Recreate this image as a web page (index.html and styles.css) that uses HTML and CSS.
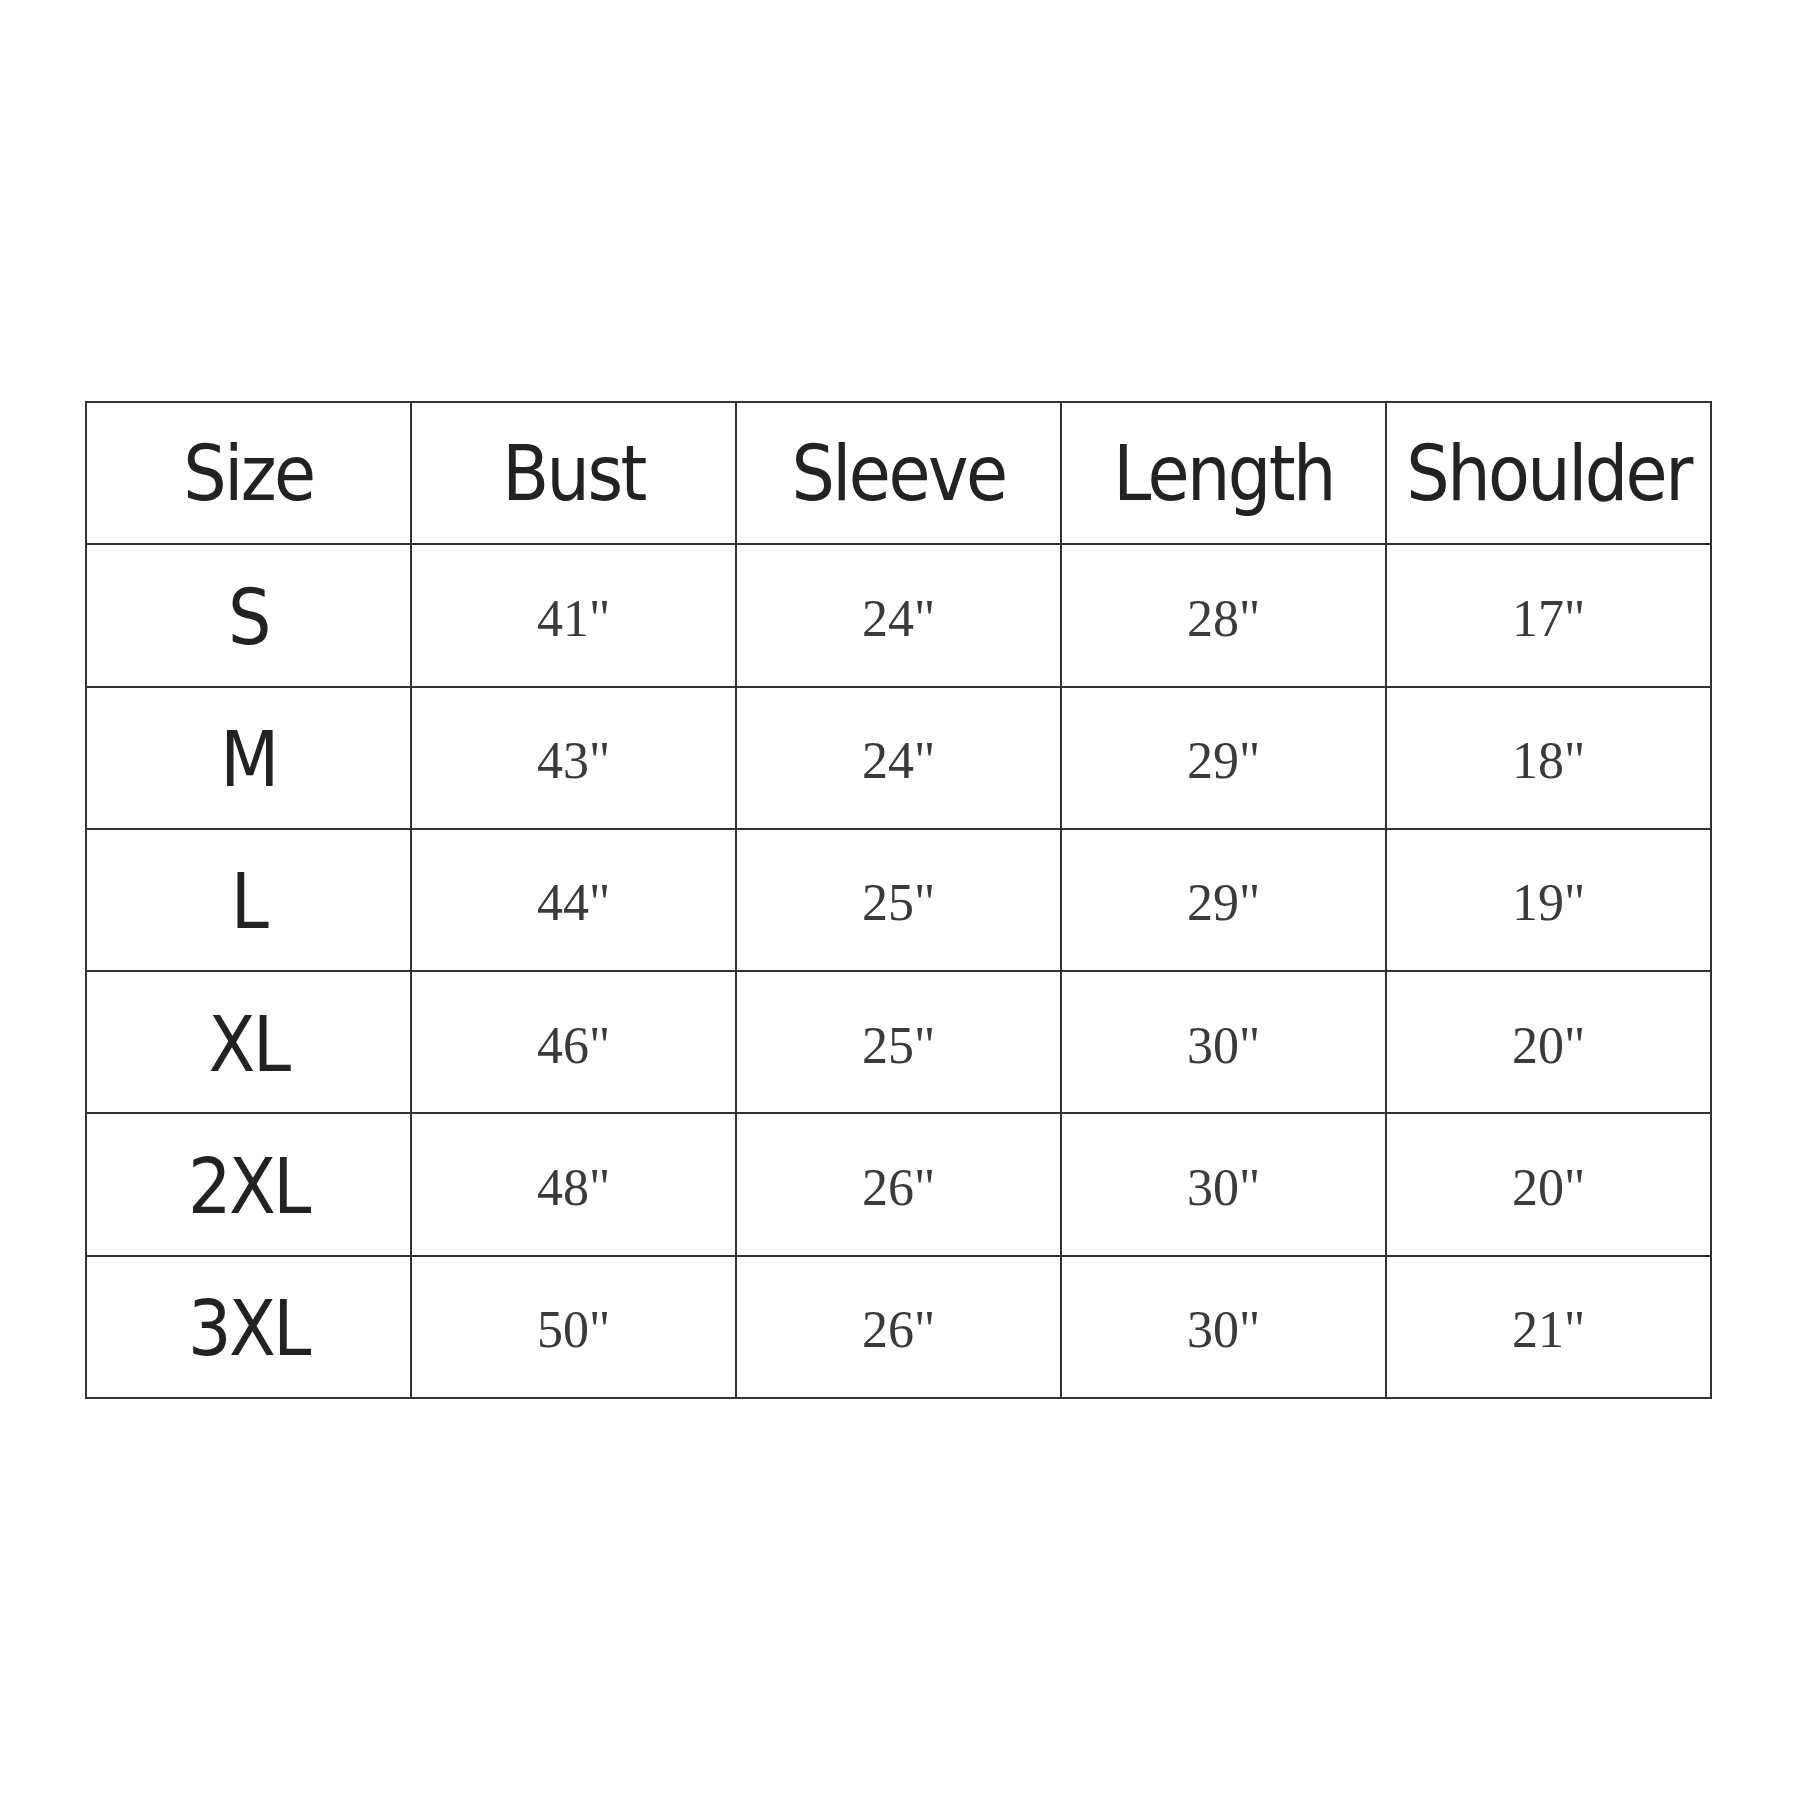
FILE: index.html
```html
<!DOCTYPE html>
<html>
<head>
<meta charset="utf-8">
<link rel="stylesheet" href="styles.css">
</head>
<body>
<div class="page">
  <div class="chart">
    <div class="cell head">Size</div><div class="cell head">Bust</div><div class="cell head">Sleeve</div><div class="cell head">Length</div><div class="cell head">Shoulder</div>
    <div class="cell size">S</div><div class="cell num">41"</div><div class="cell num">24"</div><div class="cell num">28"</div><div class="cell num">17"</div>
    <div class="cell size">M</div><div class="cell num">43"</div><div class="cell num">24"</div><div class="cell num">29"</div><div class="cell num">18"</div>
    <div class="cell size">L</div><div class="cell num">44"</div><div class="cell num">25"</div><div class="cell num">29"</div><div class="cell num">19"</div>
    <div class="cell size">XL</div><div class="cell num">46"</div><div class="cell num">25"</div><div class="cell num">30"</div><div class="cell num">20"</div>
    <div class="cell size">2XL</div><div class="cell num">48"</div><div class="cell num">26"</div><div class="cell num">30"</div><div class="cell num">20"</div>
    <div class="cell size">3XL</div><div class="cell num">50"</div><div class="cell num">26"</div><div class="cell num">30"</div><div class="cell num">21"</div>
  </div>
</div>
</body>
</html>
```
FILE: styles.css
```css
html, body {
  margin: 0;
  padding: 0;
  background: #ffffff;
}
.page {
  width: 1800px;
  height: 1800px;
  padding: 401px 0 0 85px;
  box-sizing: border-box;
}
.chart {
  width: 1627px;
  height: 998px;
  box-sizing: border-box;
  display: grid;
  grid-template-columns: repeat(5, 1fr);
  grid-template-rows: repeat(7, 1fr);
  gap: 2px;
  padding: 2px;
  background: #333333;
}
.cell {
  background: #ffffff;
  display: flex;
  align-items: center;
  justify-content: center;
}
.head, .size {
  font-family: "DejaVu Sans Condensed", "DejaVu Sans", sans-serif;
  font-size: 76px;
  letter-spacing: -2.5px;
  color: #222222;
}
.size {
  padding-top: 4px;
}
.num {
  font-family: "Liberation Serif", "Times New Roman", serif;
  font-size: 52px;
  color: #3a3a3a;
  padding-top: 6px;
}
```
